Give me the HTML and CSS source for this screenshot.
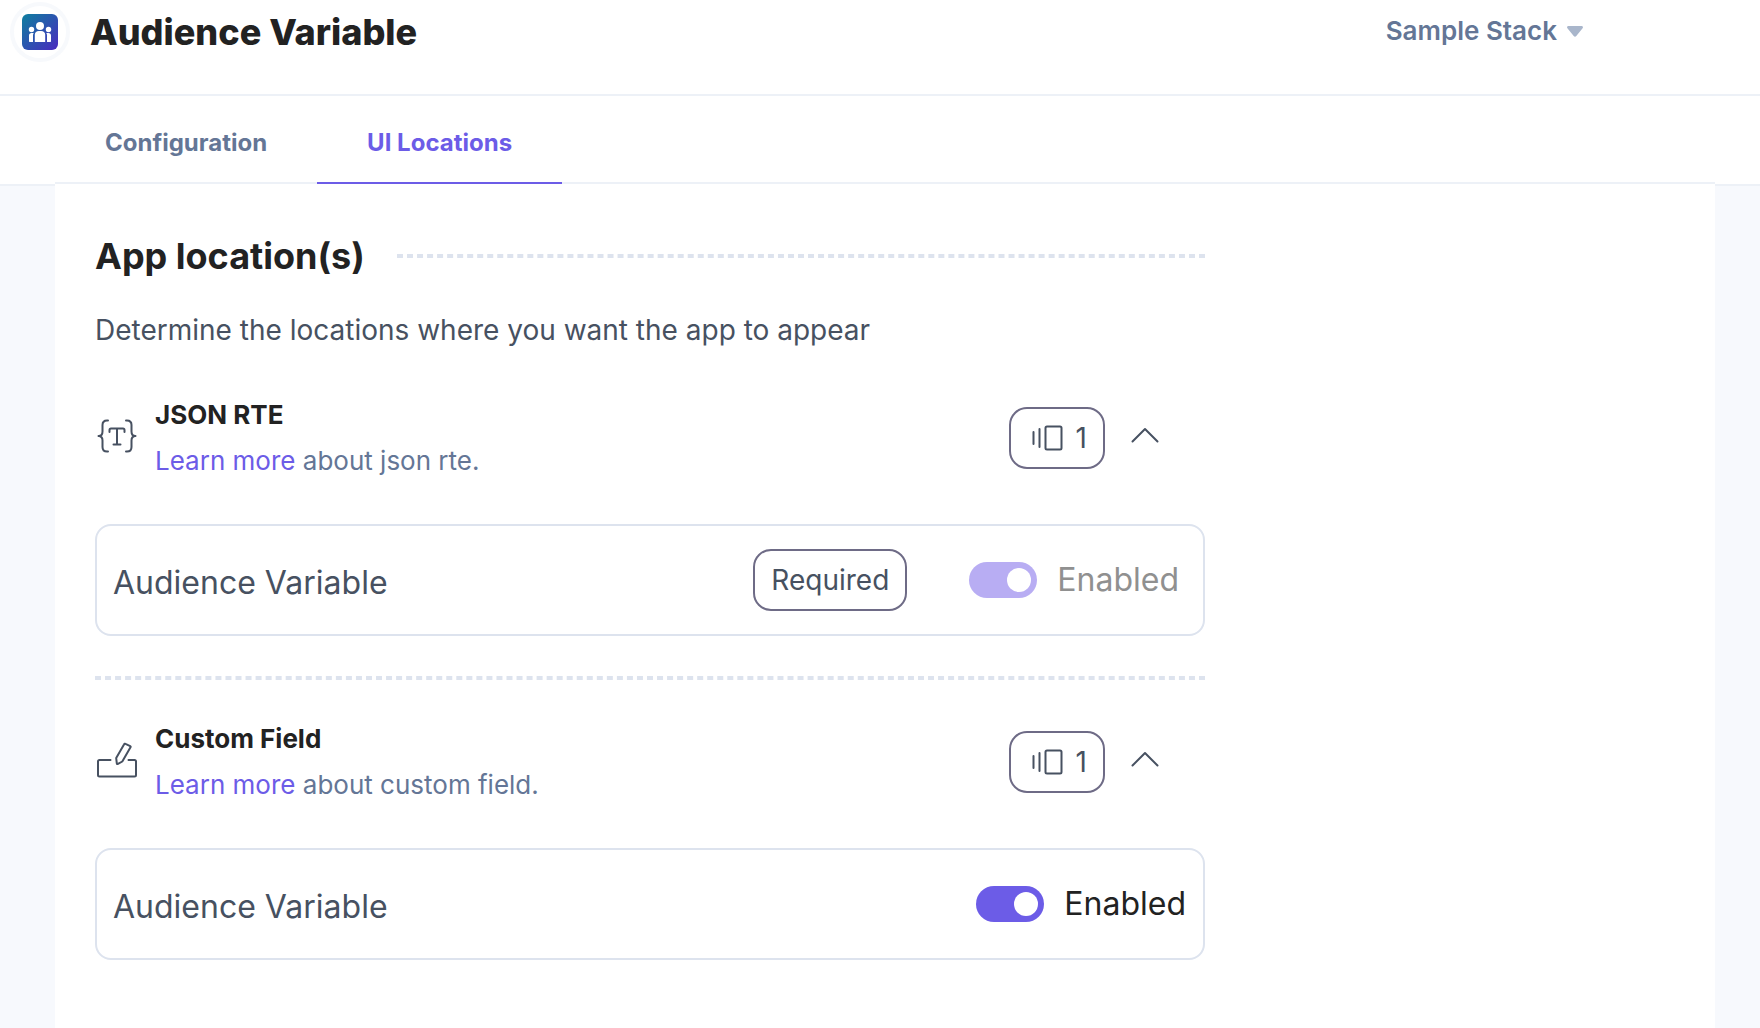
FILE: index.html
```html
<!DOCTYPE html>
<html lang="en">
<head>
<meta charset="utf-8">
<meta name="viewport" content="width=device-width, initial-scale=1">
<title>Audience Variable</title>
<link rel="stylesheet" href="styles.css">
</head>
<body>
<svg class="sprite" aria-hidden="true">
  <symbol id="icon-instances" viewBox="0 0 32 28">
    <path d="M2.500 8v12M8.500 5v18"/>
    <rect x="14.500" y="2.500" width="16" height="23" rx="1.500"/>
  </symbol>
  <symbol id="icon-chevron" viewBox="0 0 28 16">
    <path d="M1.500 14.500 14 2l12.500 12.500"/>
  </symbol>
</svg>

<header class="header">
  <span class="app-icon">
    <svg width="36" height="36" viewBox="0 0 36 36" aria-hidden="true">
      <defs>
        <linearGradient id="app-gradient" x1="0" y1="0" x2="1" y2="1">
          <stop offset="0" stop-color="#0d7f9f"/>
          <stop offset="1" stop-color="#4a2abf"/>
        </linearGradient>
      </defs>
      <rect width="36" height="36" rx="6" fill="url(#app-gradient)"/>
      <g fill="#fff">
        <circle cx="18" cy="12" r="4"/>
        <circle cx="9.500" cy="15.500" r="2.700"/>
        <circle cx="26.500" cy="15.500" r="2.700"/>
        <path d="M12.800 28v-7.500a4 4 0 0 1 4-3.500h2.400a4 4 0 0 1 4 3.500V28z"/>
        <path d="M7 27.500v-6c0-1.600 1-2.600 2.500-2.600h2.200c-.5 1-.7 1.600-.7 2.600v6.500H7.500z"/>
        <path d="M29 27.500v-6c0-1.600-1-2.600-2.500-2.600h-2.200c.5 1 .7 1.600.7 2.600v6.500h3.500z"/>
      </g>
    </svg>
  </span>
  <h1 class="title">Audience Variable</h1>
  <button class="stack" type="button">
    Sample Stack
    <svg width="16" height="11" viewBox="0 0 16 11" aria-hidden="true"><path d="M1.500 0h13c1.300 0 1.900 1.300 1.100 2.300L9.300 10c-.8 1-1.800 1-2.600 0L.4 2.300C-.4 1.300.2 0 1.500 0z" fill="#a9b6cb"/></svg>
  </button>
</header>

<nav class="tabs-bar">
  <div class="tabs">
    <a class="tab" href="#configuration">Configuration</a>
    <a class="tab tab-active" href="#locations" aria-current="page">UI Locations</a>
  </div>
</nav>

<main class="panel" id="locations">
  <div class="content">
    <div class="heading">
      <h2 class="title">App location(s)</h2>
      <hr class="dashes">
    </div>
    <p class="intro">Determine the locations where you want the app to appear</p>

    <section>
      <div class="location">
        <svg class="line-icon location-icon" width="44" height="44" viewBox="0 0 44 44" aria-hidden="true">
          <path d="M13 6.500h-1c-3 0-4.500 1.500-4.500 4.500v6.500c0 3-1.500 4.500-4 4.500 2.500 0 4 1.500 4 4.500V33c0 3 1.500 4.500 4.500 4.500h1M31 6.500h1c3 0 4.500 1.500 4.500 4.500v6.500c0 3 1.500 4.500 4 4.500-2.500 0-4 1.500-4 4.500V33c0 3-1.500 4.500-4.500 4.500h-1M14.500 18v-2c0-1 .5-1.500 1.500-1.500h12c1 0 1.500.5 1.500 1.500v2M22 14.500V30M18.500 30.500h7"/>
        </svg>
        <div class="location-text">
          <h3>JSON RTE</h3>
          <p><a href="#json-rte">Learn more</a> about json rte.</p>
        </div>
        <span class="badge badge-count"><svg class="line-icon" width="32" height="28" aria-hidden="true"><use href="#icon-instances"/></svg>1</span>
        <button class="toggle-section" type="button" aria-expanded="true" aria-label="Collapse JSON RTE"><svg class="line-icon" width="28" height="16" aria-hidden="true"><use href="#icon-chevron"/></svg></button>
      </div>
      <div class="card card-locked">
        <span class="card-name">Audience Variable</span>
        <span class="badge">Required</span>
        <label class="switch"><input type="checkbox" role="switch" checked disabled>Enabled</label>
      </div>
    </section>

    <hr class="dashes">

    <section>
      <div class="location">
        <svg class="line-icon location-icon" width="44" height="44" viewBox="0 0 44 44" aria-hidden="true">
          <path d="M15.500 22H4.500c-1 0-1.500.5-1.500 1.500V37c0 1 .5 1.500 1.500 1.500h35c1 0 1.500-.5 1.500-1.500V23.500c0-1-.5-1.500-1.500-1.500h-6M29 6.500l-7.800 13.600.6 5.200c.1.700.6.900 1.200.6l4.300-2.400 8.200-14.200c.3-.5.200-.9-.3-1.200L30.500 5.900c-.6-.4-1.100-.2-1.500.6z"/>
        </svg>
        <div class="location-text">
          <h3>Custom Field</h3>
          <p><a href="#custom-field">Learn more</a> about custom field.</p>
        </div>
        <span class="badge badge-count"><svg class="line-icon" width="32" height="28" aria-hidden="true"><use href="#icon-instances"/></svg>1</span>
        <button class="toggle-section" type="button" aria-expanded="true" aria-label="Collapse Custom Field"><svg class="line-icon" width="28" height="16" aria-hidden="true"><use href="#icon-chevron"/></svg></button>
      </div>
      <div class="card">
        <span class="card-name">Audience Variable</span>
        <label class="switch"><input type="checkbox" role="switch" checked>Enabled</label>
      </div>
    </section>
  </div>
</main>
</body>
</html>
```

FILE: styles.css
```css
*,
*::before {
  box-sizing: border-box;
}

body {
  display: flex;
  flex-direction: column;
  min-height: 100vh;
  margin: 0;
  background: #f7f9fd;
  color: #222;
  font-family: Inter, "Liberation Sans", sans-serif;
}

h1, h2, h3, p {
  margin: 0;
}

a {
  color: #6c5ce7;
  text-decoration: none;
}

button {
  padding: 0;
  border: 0;
  background: none;
  font: inherit;
  cursor: pointer;
}

svg {
  display: block;
  flex: none;
}

.sprite {
  position: absolute;
  width: 0;
  height: 0;
}

.line-icon {
  fill: none;
  stroke: #475161;
  stroke-width: 2;
  stroke-linecap: round;
  stroke-linejoin: round;
}

.title {
  font-size: 36px;
  line-height: 48px;
  font-weight: 700;
}

/* Header */
.header {
  display: flex;
  align-items: center;
  gap: 20px;
  padding: 2px 177px 32px 10px;
  border-bottom: 2px solid #edf1f7;
  background: #fff;
}

.header .title {
  font-weight: 800;
}

.app-icon {
  padding: 8px;
  border: 4px solid #f7f9fc;
  border-radius: 50%;
}

.stack {
  display: flex;
  align-items: center;
  gap: 10px;
  margin-left: auto;
  padding-bottom: 2px;
  color: #647696;
  font-size: 26px;
  line-height: 32px;
  font-weight: 600;
}

/* Tabs */
.tabs-bar {
  padding: 0 45px 0 55px;
  border-bottom: 2px solid #edf1f7;
  background: #fff;
}

.tabs {
  display: flex;
  border-bottom: 2px solid #edf1f7;
}

.tab {
  margin-bottom: -2px;
  padding: 31px 50px 23px;
  border-bottom: 2px solid transparent;
  color: #647696;
  font-size: 24px;
  line-height: 32px;
  font-weight: 700;
}

.tab-active {
  border-color: #6c5ce7;
  color: #6c5ce7;
}

/* Panel */
.panel {
  flex: 1;
  margin: -2px 45px 0 55px;
  padding: 48px 40px;
  background: #fff;
}

.content {
  max-width: 1110px;
}

.dashes {
  height: 0;
  margin: 40px 0 43px;
  border: 0 dashed #dde3ee;
  border-width: 2px 0;
}

.heading {
  display: flex;
  align-items: center;
  gap: 32px;
}

.heading .dashes {
  flex: 1;
  margin: 0;
}

.intro {
  margin: 30px 0 49px;
  color: #475161;
  font-size: 28px;
  line-height: 40px;
}

/* Location rows */
.location {
  display: flex;
  align-items: center;
  margin-bottom: 47px;
  padding-right: 46px;
}

.location-icon {
  margin-bottom: 4px;
}

.location-text {
  display: grid;
  flex: 1;
  gap: 14px;
  margin-left: 16px;
  color: #647696;
  font-size: 26px;
  line-height: 32px;
}

.location-text h3 {
  color: #222;
  font-size: inherit;
  font-weight: 700;
}

.badge {
  display: flex;
  align-items: center;
  padding: 11px 16px;
  border: 2px solid #6e6b86;
  border-radius: 18px;
  color: #475161;
  font-size: 28px;
  line-height: 36px;
}

.badge-count {
  gap: 13px;
  padding-left: 20px;
}

.toggle-section {
  margin-left: 26px;
  padding-bottom: 6px;
}

/* Cards */
.card {
  display: flex;
  align-items: center;
  height: 112px;
  padding: 0 17px 0 16px;
  border: 2px solid #dde3ee;
  border-radius: 16px;
  font-size: 32px;
  line-height: 40px;
}

.card-locked {
  padding-right: 24px;
}

.card-name {
  flex: 1;
  padding-top: 5px;
  color: #475161;
}

.switch {
  display: flex;
  align-items: center;
  gap: 20px;
  margin-left: 62px;
}

.switch input {
  display: flex;
  width: 68px;
  height: 36px;
  margin: 0;
  padding: 6px;
  justify-content: flex-end;
  appearance: none;
  border-radius: 18px;
  background: #6c5ce7;
}

.switch input::before {
  width: 24px;
  height: 24px;
  border-radius: 50%;
  background: #fff;
  content: "";
}

.switch input:not(:checked) {
  justify-content: flex-start;
  background: #a9b6cb;
}

.card-locked .switch {
  color: #909090;
}

.card-locked .switch input {
  background: #b8adf3;
}
```
